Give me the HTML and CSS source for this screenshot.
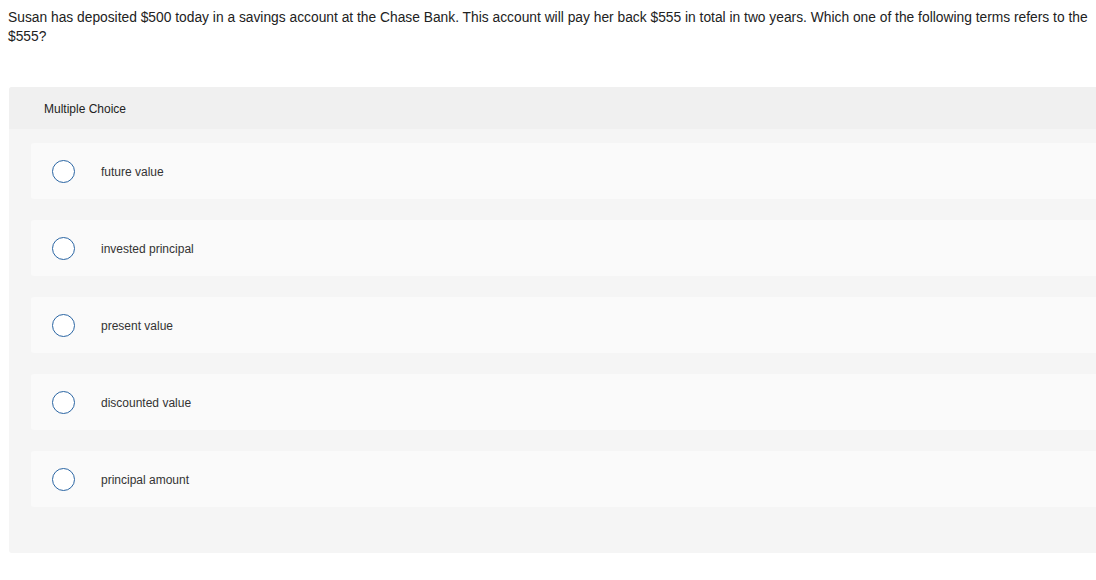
FILE: index.html
```html
<!DOCTYPE html>
<html>
<head>
<meta charset="utf-8">
<link rel="stylesheet" href="styles.css">
</head>
<body>
<p class="question">Susan has deposited $500 today in a savings account at the Chase Bank. This account will pay her back $555 in total in two years. Which one of the following terms refers to the $555?</p>
<div class="panel">
  <div class="panel-head">Multiple Choice</div>
  <div class="panel-body">
    <div class="option"><span class="radio"></span><span class="label">future value</span></div>
    <div class="option"><span class="radio"></span><span class="label">invested principal</span></div>
    <div class="option"><span class="radio"></span><span class="label">present value</span></div>
    <div class="option"><span class="radio"></span><span class="label">discounted value</span></div>
    <div class="option"><span class="radio"></span><span class="label">principal amount</span></div>
  </div>
</div>
</body>
</html>
```
FILE: styles.css
```css
html, body {
  margin: 0;
  padding: 0;
  background: #ffffff;
  font-family: "Liberation Sans", Arial, sans-serif;
  color: #222;
}
.question {
  margin: 0;
  padding: 8px 0 0 8px;
  font-size: 13.8px;
  line-height: 19px;
  height: 38px;
  color: #222;
}
.panel {
  margin: 41px 0 0 9px;
  background: #f5f5f5;
  border-radius: 3px 0 0 3px;
}
.panel-head {
  height: 42px;
  display: flex;
  align-items: center;
  padding-left: 35px;
  padding-top: 1px;
  box-sizing: border-box;
  background: #f0f0f0;
  border-radius: 3px 0 0 0;
  font-size: 12px;
  color: #222;
}
.panel-body {
  padding: 14px 0 46px 22px;
  display: flex;
  flex-direction: column;
  gap: 21px;
}
.option {
  height: 56px;
  background: #fafafa;
  border-radius: 3px 0 0 3px;
  display: flex;
  align-items: center;
  padding-left: 21px;
}
.radio {
  width: 21px;
  height: 21px;
  border: 1.5px solid #2a65a3;
  border-radius: 50%;
  background: #fff;
  flex: none;
}
.label {
  margin-left: 26px;
  padding-top: 1px;
  font-size: 12px;
  color: #333;
}
```
